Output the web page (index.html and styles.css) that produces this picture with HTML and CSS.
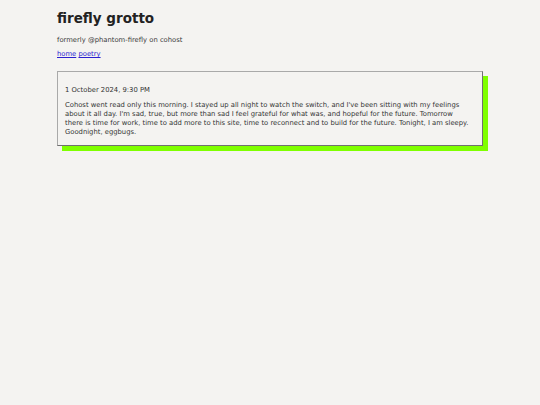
FILE: index.html
```html
<!DOCTYPE html>
<html>
<head>
<meta charset="utf-8">
<link rel="stylesheet" href="styles.css">
</head>
<body>
<div class="page">
  <h1 class="title">firefly grotto</h1>
  <p class="subtitle">formerly @phantom-firefly on cohost</p>
  <nav class="nav"><a href="#">home</a> <a href="#">poetry</a></nav>
  <article class="post">
    <p class="date">1 October 2024, 9:30 PM</p>
    <p class="body">Cohost went read only this morning. I stayed up all night to watch the switch, and I've been sitting with my feelings about it all day. I'm sad, true, but more than sad I feel grateful for what was, and hopeful for the future. Tomorrow there is time for work, time to add more to this site, time to reconnect and to build for the future. Tonight, I am sleepy. Goodnight, eggbugs.</p>
  </article>
</div>
</body>
</html>
```
FILE: styles.css
```css
html, body {
  margin: 0;
  padding: 0;
  background: #f4f3f1;
}
body {
  font-family: "DejaVu Sans", Verdana, sans-serif;
  color: #333333;
  font-size: 6.8px;
}
.page {
  width: 426px;
  margin: 0 auto;
  padding: 9px 0 20px;
}
.title {
  font-size: 13.5px;
  font-weight: bold;
  margin: 0;
  line-height: 18px;
  color: #222222;
}
.subtitle {
  margin: 9px 0 0;
  line-height: 9px;
  color: #3a3a3a;
}
.nav {
  margin-top: 5px;
  line-height: 9px;
}
.nav a {
  color: #2a1fd0;
}
.post {
  margin-top: 12px;
  border: 1px solid;
  border-color: #a9a9a9 #707070 #707070 #a9a9a9;
  box-shadow: 5px 5px 0 0 #7fff00;
  padding: 13px 10px 8px 7px;
}
.date {
  margin: 0;
  line-height: 9px;
  padding-top: 1px;
}
.body {
  margin: 6px 0 0;
  line-height: 9px;
}
```
